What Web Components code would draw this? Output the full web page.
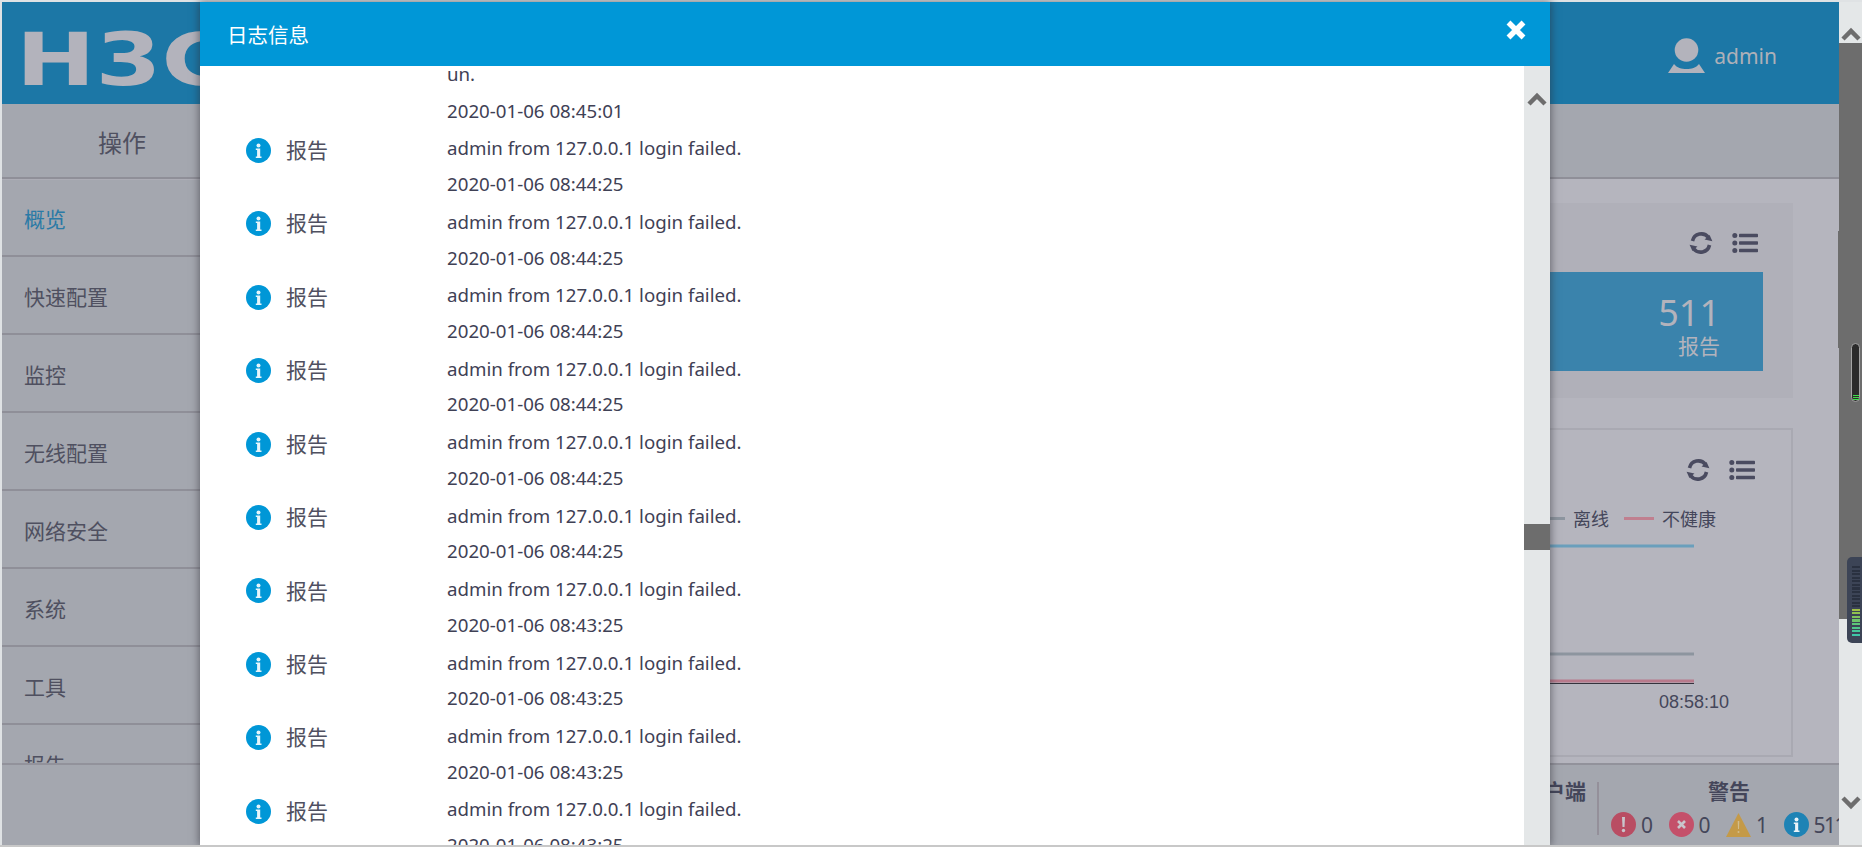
<!DOCTYPE html>
<html lang="zh"><head><meta charset="utf-8"><title>日志信息</title>
<style>
html,body{margin:0;padding:0;height:847px;overflow:hidden;background:#dfe2e4}
body{font-family:"Noto Sans","Noto Sans CJK SC",sans-serif;color:#44465a}
</style></head><body>
<h3c-app></h3c-app>
<script>
const FONT='"Noto Sans","Noto Sans CJK SC",sans-serif';
const ICONS={
 refresh:'<svg width="26" height="24" viewBox="0 0 26 24"><path d="M4.5 10a9 9 0 0 1 16-3.5M21.5 14a9 9 0 0 1-16 3.5" fill="none" stroke="#4a4b60" stroke-width="3.6"/><path d="M17 9.5h8L21 4z" fill="#4a4b60" transform="rotate(12 21 7)"/><path d="M1 14.500h8L5 20z" fill="#4a4b60" transform="rotate(12 5 17)"/></svg>',
 list:'<svg width="26" height="24" viewBox="0 0 26 24"><g fill="#4a4b60"><circle cx="2.800" cy="4.500" r="2.500"/><circle cx="2.800" cy="12" r="2.500"/><circle cx="2.800" cy="19.500" r="2.500"/><rect x="7" y="2.700" width="19" height="3.600" rx=".8"/><rect x="7" y="10.200" width="19" height="3.600" rx=".8"/><rect x="7" y="17.700" width="19" height="3.600" rx=".8"/></g></svg>',
 up:'<svg width="20" height="14" viewBox="0 0 20 14" style="display:block"><path d="M2 12l8-8 8 8" fill="none" stroke="#6d6d6d" stroke-width="4.500"/></svg>',
 down:'<svg width="20" height="14" viewBox="0 0 20 14" style="display:block"><path d="M2 2l8 8 8-8" fill="none" stroke="#6d6d6d" stroke-width="4.500"/></svg>',
};
function info(c,s){return `<svg width="${s}" height="${s}" viewBox="0 0 25 25" style="display:block;flex:none"><circle cx="12.500" cy="12.500" r="12.500" fill="${c}"/><circle cx="12.500" cy="7.500" r="2" fill="#fff" fill-opacity=".9"/><path d="M9.800 10.500h4.400v8h1.300v1.500H9.800v-1.500h1.300v-6.500H9.800z" fill="#fff" fill-opacity=".9"/></svg>`}
function def(name,html){customElements.define(name,class extends HTMLElement{
  constructor(){super();this.attachShadow({mode:'open'}).innerHTML=typeof html==='function'?html(this):html}
})}

class LogRow extends HTMLElement{
  connectedCallback(){
    if(this.shadowRoot)return;
    const m=this.getAttribute('msg'),d=this.getAttribute('date');
    this.attachShadow({mode:'open'}).innerHTML=`<style>
    :host{display:grid;grid-template-columns:247px 1fr;height:73.45px;font:18.7px/36.72px ${FONT};color:#3f4155}
    .l{display:flex;align-items:center;height:36.72px;padding-left:46px;gap:15px;font-size:21px;color:#4f5060}
    .l svg{margin-top:3px}
    .l span{margin-top:3px}
    .m{display:block;height:36.72px;white-space:nowrap}
    .d{margin-top:-1px}
    </style><div class="l">${info('#0097d7',25)}<span>报告</span></div><div><div class="m">${m}</div><div class="m d">${d}</div></div>`;
  }
}
customElements.define('log-row',LogRow);

def('log-modal',`<style>
:host{position:absolute;left:200px;top:2px;width:1350px;height:843px;background:#fff;display:flex;flex-direction:column;box-shadow:0 0 8px 1px rgba(40,40,50,.55);z-index:5}
header{flex:none;height:64px;background:#0097d7;color:#fff;display:flex;align-items:center;justify-content:space-between;padding:0 23px 0 27px;font:20.5px ${FONT}}
header svg{display:block;margin-top:-8px}
.b{flex:1;min-height:0;display:flex}
.list{flex:1;overflow:hidden;min-width:0}
.list>.in{margin-top:-10px}
.head{padding-left:247px;font:18.7px/36.72px ${FONT};color:#3f4155;margin-bottom:1px}
.sb{flex:none;width:26px;background:#e4e7e8;padding-top:26px;box-sizing:border-box}
.sb svg{margin:0 0 0 3px}
.th{height:26px;background:#6d6d6d;margin-top:418px}
</style><header><span>日志信息</span><svg width="22" height="22" viewBox="0 0 22 22"><path d="M3.500 3.500l15 15M18.500 3.500l-15 15" stroke="#fff" stroke-width="5.500"/></svg></header>
<div class="b"><div class="list"><div class="in"><div class="head">un.<br>2020-01-06 08:45:01</div><slot></slot></div></div><div class="sb">${ICONS.up}<div class="th"></div></div></div>`);

def('app-header',`<style>
:host{display:flex;height:103px;background:#1c77a6;align-items:center;justify-content:space-between;overflow:hidden;box-sizing:border-box;padding:0 62px 0 14px}
.logo{font:bold 73px/1 "DejaVu Sans",sans-serif;color:#b3b3bc;transform:scaleX(1.3);transform-origin:0 50%;white-space:nowrap;margin-top:12px;filter:blur(.4px)}
.u{display:flex;align-items:center;gap:9px;color:#aeb0b8;font:21px ${FONT};margin-top:5px}
</style><div class="logo">H3C</div><div class="u"><svg width="37" height="36" viewBox="0 0 37 36"><g fill="#b3b3bc"><circle cx="18.500" cy="12" r="11.800"/><path d="M0 35l6-9c3 4 7.500 5 12.500 5s9.500-1 12.500-5l6 9z"/></g></svg><span>admin</span></div>`);

def('side-menu',`<style>
:host{display:block;width:300px;height:660px;overflow:hidden;background:#a4a7af;font:21px ${FONT};color:#4f5060}
.t{height:73px;border-bottom:2px solid #8f8f98;box-shadow:0 1px 0 #adadb6;font-size:24px;padding-left:96px;line-height:78px}
.i{height:75px;border-bottom:2px solid #8f8f98;margin-top:1px;padding-left:22px;line-height:78px}
.on{color:#2a7aa6}
</style><div class="t">操作</div><div class="i on">概览</div><div class="i">快速配置</div><div class="i">监控</div><div class="i">无线配置</div><div class="i">网络安全</div><div class="i">系统</div><div class="i">工具</div><div class="i">报告</div>`);

def('tool-icons',`<style>
:host{display:flex;justify-content:flex-end;gap:18px;height:24px}
svg{display:block}
</style>${ICONS.refresh}${ICONS.list}`);

def('event-panel',`<style>
:host{display:block;height:195px;background:#b0b0b9;box-sizing:border-box;padding:28px 35px 0 0}
.box{margin:17px -5px 0 0;height:99px;background:#3a83ac;color:#b3b3bc;text-align:right;padding-right:43px;box-sizing:border-box;font:21px ${FONT}}
.n{font-size:36px;line-height:42px;padding-top:20px}
.l{line-height:24px;margin-top:0}
</style><tool-icons></tool-icons><div class="box"><div class="n">511</div><div class="l">报告</div></div>`);

def('chart-panel',`<style>
:host{display:flex;flex-direction:column;height:329px;box-sizing:border-box;border:2px solid #a9a9b2;padding:28px 36px 0 0;margin-top:30px}
.lg{display:flex;justify-content:flex-end;align-items:center;margin:24px 39px 0 0;height:24px;font:18px ${FONT};color:#44465a}
.lg i{display:block;width:30px;height:3px;margin:0 8px 0 15px}
.c{align-self:flex-end;margin:4px -36px 0 0;display:block}
text{font:18px "Liberation Sans",sans-serif;fill:#44465a}
</style><tool-icons></tool-icons>
<div class="lg"><i style="background:#8d959f"></i><span>离线</span><i style="background:#c07f8f"></i><span>不健康</span></div>
<svg class="c" width="500" height="190" viewBox="0 0 500 190"><g fill="none" stroke-width="3"><path d="M0 12H403" stroke="#6a9fbc"/><path d="M0 120H403" stroke="#8d959f"/><path d="M0 147H403" stroke="#b87a8c"/></g><path d="M0 149.500H403" stroke="#33333d" stroke-width="1"/><text x="403" y="174" text-anchor="middle">08:58:10</text></svg>`);

def('app-main',`<style>
:host{display:block;height:660px;background:#a4a7af;overflow:hidden}
.tab{height:75px;background:#a4a7af;border-bottom:2px solid #8f8f98;box-sizing:border-box}
.c{height:585px;background:#b5b5be;padding:24px 46px 0 0;box-sizing:border-box;overflow:hidden;border-top:0}
</style><div class="tab"></div><div class="c"><event-panel></event-panel><chart-panel></chart-panel></div>`);

def('app-footer',`<style>
:host{display:grid;grid-template-columns:1595px 262px;height:80px;background:#a4a7af;border-top:2px solid #92929b;box-sizing:content-box;overflow:hidden;font:bold 21px ${FONT};color:#44465a;margin-top:-1px}
.cl{text-align:right;padding:16px 11px 0 0;line-height:20px}
.al{margin-top:17px;height:53px;border-left:2px solid #94909a}
.h{line-height:18px;text-align:center}
.r{display:flex;margin-top:12px;padding-left:12px;font:normal 21px/26px ${FONT};color:#44465a}
.it{flex:0 0 57.5px;display:flex;gap:5px;white-space:nowrap}
.it svg{display:block;flex:none}
.tight{letter-spacing:-1.5px}
</style><div class="cl">客户端</div><div class="al"><div class="h">警告</div><div class="r">
<div class="it"><svg width="25" height="25" viewBox="0 0 25 25"><circle cx="12.500" cy="12.500" r="12.500" fill="#b94d63"/><path d="M11 5h3l-.5 10h-2z" fill="#c9c5cc"/><circle cx="12.500" cy="18.500" r="1.700" fill="#c9c5cc"/></svg><span>0</span></div>
<div class="it"><svg width="25" height="25" viewBox="0 0 25 25"><circle cx="12.500" cy="12.500" r="12.500" fill="#c4506a"/><path d="M9 9l7 7M16 9l-7 7" stroke="#c9c5cc" stroke-width="2.600"/></svg><span>0</span></div>
<div class="it"><svg width="25" height="25" viewBox="0 0 25 25"><path d="M12.500 1L25 25H0z" fill="#c49a48"/><path d="M11.700 9h1.600l-.3 8h-1z" fill="#d2bd8d"/><circle cx="12.500" cy="20" r="1" fill="#d2bd8d"/></svg><span>1</span></div>
<div class="it">${info('#1e83b5',25)}<span class="tight">511</span></div>
</div></div>`);

def('page-scrollbar',`<style>
:host{display:flex;flex-direction:column;width:23px;height:843px;background:#e4e7e8;position:relative}
svg{margin:25px 0 0 2px}
.th{height:576px;background:#6d6d6d;margin-top:2px}
.dn{margin:177px 0 0 2px}
.dn svg{margin:0}
.edge{position:absolute;left:-1px;top:229px;width:1px;height:117px;background:#6d6d6d}
</style>${ICONS.up}<div class="th"></div><div class="dn">${ICONS.down}</div><div class="edge"></div>`);

def('meter-widgets',(()=>{let dark='',col='';
 for(let i=0;i<12;i++)dark+=`<b style="background:#2a3140"></b>`;
 ['#9fbf45','#8fc24f','#7fc45c','#6cc56a','#5dc67a','#4fc78a','#45c79a','#3fc7a8'].forEach(c=>col+=`<b style="background:${c}"></b>`);
 return `<style>
:host{position:absolute;right:0;top:0;z-index:6}
.a{position:absolute;right:2px;top:343px;width:7px;height:56px;background:#2b2b2b;border:1px solid #a5a5a5;border-radius:5px;box-sizing:content-box;display:flex;flex-direction:column;justify-content:flex-end;align-items:center;padding-bottom:1px;gap:1px}
.a b{display:block;width:6px;height:1px;background:#3fdc4a}
.w{position:absolute;right:0;top:557px;width:15px;height:86px;background:#3c4456;border-radius:5px 0 0 5px;box-sizing:border-box;padding:9px 2px 7px 5px;display:flex;flex-direction:column;gap:1.4px}
.w b{display:block;height:2.200px}
</style><div class="a"><b></b><b></b><b></b></div><div class="w">${dark}${col}</div>`})());

def('h3c-app',`<style>
:host{display:block;position:relative;width:1862px;height:847px;overflow:hidden;box-sizing:border-box;padding:2px 0 2px 2px;background:#dfe2e4}
.g{display:grid;grid-template-columns:1837px 23px;height:843px}
.m{display:flex;flex-direction:column;height:843px;overflow:hidden}
.r{display:grid;grid-template-columns:300px 1fr;height:660px}
.bar{position:absolute;left:0;right:0;bottom:0;height:2px;background:#c8c8c8;z-index:7}
</style><div class="g"><div class="m"><app-header></app-header><div class="r"><side-menu></side-menu><app-main></app-main></div><app-footer></app-footer></div><page-scrollbar></page-scrollbar></div>
<log-modal id="lm"><slot></slot></log-modal><meter-widgets></meter-widgets><div class="bar"></div>`);

const lm=document.querySelector('h3c-app').shadowRoot.getElementById('lm');
['08:44:25','08:44:25','08:44:25','08:44:25','08:44:25','08:44:25','08:43:25','08:43:25','08:43:25','08:43:25'].forEach(t=>{
  const r=document.createElement('log-row');
  r.setAttribute('msg','admin from 127.0.0.1 login failed.');
  r.setAttribute('date','2020-01-06 '+t);
  lm.appendChild(r);
});
</script></body></html>
